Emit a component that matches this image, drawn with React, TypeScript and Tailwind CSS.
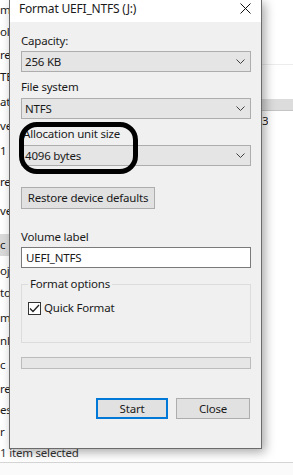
import React from "react";

const navItems = [
  { text: "mputer", cls: "mt-[-1px]", sel: false },
  { text: "olicies", cls: "mt-0", sel: false },
  { text: "rea", cls: "mt-[1px]", sel: false },
  { text: "TEAM", cls: "mt-[1px]", sel: false },
  { text: "ats", cls: "mt-[3px]", sel: false },
  { text: "ver", cls: "mt-[2px]", sel: false },
  { text: "1 ", cls: "mt-[3px]", sel: false },
  { text: "res", cls: "mt-[9px]", sel: false },
  { text: "ver", cls: "mt-[7px]", sel: false },
  { text: "c", cls: "mt-[13px]", sel: true },
  { text: "ojects", cls: "mt-[4px]", sel: false },
  { text: "top", cls: "mt-0", sel: false },
  { text: "ments", cls: "mt-[3px]", sel: false },
  { text: "nloads", cls: "mt-[1px]", sel: false },
  { text: "c", cls: "mt-[2px]", sel: false },
  { text: "res", cls: "mt-[3px]", sel: false },
  { text: "es", cls: "mt-[-1px]", sel: false },
  { text: "r", cls: "mt-0", sel: false },
];

function Chevron() {
  return (
    <svg width="9" height="5" viewBox="0 0 9 5" className="shrink-0">
      <polyline points="0.5,0.5 4.5,4.5 8.5,0.5" fill="none" stroke="#404040" strokeWidth="1" />
    </svg>
  );
}

function Combo({ value }: { value: string }) {
  return (
    <div className="h-[21px] w-full border border-[#adadad] bg-[#e5e5e5] flex items-center justify-between pl-[3px] pr-[5px]">
      <span>{value}</span>
      <Chevron />
    </div>
  );
}

export default function App() {
  return (
    <div className="relative w-[293px] h-[475px] overflow-hidden bg-white text-[11.5px] leading-[16px] tracking-[-0.2px] text-[#1a1a1a] font-['Noto_Sans',sans-serif]">
      {/* explorer window behind the dialog */}
      <div className="flex flex-col h-full">
        <div className="flex h-[443px]">
          <div className="w-[9px] overflow-hidden flex flex-col">
            {navItems.map((it, i) => (
              <div
                key={i}
                className={`h-[22px] flex items-center whitespace-nowrap ${it.cls} ${it.sel ? "bg-[#dadada]" : ""}`}
              >
                {it.text}
              </div>
            ))}
          </div>
          <div className="w-[141px]" />
          <div className="flex-1 flex flex-col">
            <div className="h-[65px] border-b border-[#ececec]" />
            <div className="h-[34px]" />
            <div className="h-[12px] bg-[#dcdcdc] border-b border-[#c4c4c4]" />
            <div className="flex mt-[2px]">
              <div className="w-[112px]" />
              <div className="w-[6px] overflow-hidden">3</div>
            </div>
          </div>
        </div>
        <div className="h-[19px] flex items-center whitespace-nowrap text-[#333]">1 item selected</div>
        <div className="flex-1 border-t border-[#d5d5d5] bg-[#fafafa]" />
      </div>

      {/* Format dialog */}
      <div className="absolute left-[9px] top-0 w-[253px] h-[449px] border-x border-b border-[#6b6b6b] bg-[#f0f0f0] shadow-[3px_3px_10px_rgba(0,0,0,0.35)] flex flex-col">
        <div className="h-[22px] bg-white flex items-center justify-between pl-[9px] pr-[10px] shrink-0">
          <span className="mt-[-4px] text-[12px]">Format UEFI_NTFS (J:)</span>
          <svg width="11" height="11" viewBox="0 0 11 11" className="mt-[-6px]">
            <path d="M0.5 0.5 L10.5 10.5 M10.5 0.5 L0.5 10.5" stroke="#111" strokeWidth="1" />
          </svg>
        </div>

        <div className="flex flex-col pl-[11px] pr-[10px]">
          <div className="mt-[11px] h-[16px]">Capacity:</div>
          <div className="mt-[2px]">
            <Combo value="256 KB" />
          </div>
          <div className="mt-[7px] h-[16px]">File system</div>
          <div className="mt-[3px]">
            <Combo value="NTFS" />
          </div>
          <div className="mt-[7px] h-[16px] pl-[2px]">Allocation unit size</div>
          <div className="mt-[3px]">
            <Combo value="4096 bytes" />
          </div>

          <button className="mt-[21px] h-[22px] w-[134px] border border-[#adadad] bg-[#e1e1e1] flex items-center justify-center">
            Restore device defaults
          </button>

          <div className="mt-[20px] h-[16px]">Volume label</div>
          <div className="mt-[2px] h-[21px] border border-[#7a7a7a] bg-white flex items-center pl-[4px]">
            UEFI_NTFS
          </div>

          <div className="relative mt-[16px] h-[59px] border border-[#dcdcdc] pt-[15px] pl-[6px]">
            <span className="absolute left-[6px] top-[-9px] bg-[#f0f0f0] px-[2px]">Format options</span>
            <div className="flex items-center gap-[3px]">
              <div className="w-[13px] h-[13px] border border-[#333] bg-white flex items-center justify-center">
                <svg width="11" height="9" viewBox="0 0 11 9">
                  <polyline points="1,4.5 4,7.5 10,1" fill="none" stroke="#222" strokeWidth="1.3" />
                </svg>
              </div>
              <span>Quick Format</span>
            </div>
          </div>

          <div className="mt-[14px] h-[12px] border border-[#bcbcbc] bg-[#e6e6e6]" />

          <div className="mt-[29px] flex justify-end gap-[8px] pr-[1px]">
            <button className="h-[21px] w-[72px] border-2 border-[#0078d7] bg-[#e1e1e1] flex items-center justify-center">
              Start
            </button>
            <button className="h-[21px] w-[74px] border border-[#adadad] bg-[#e1e1e1] flex items-center justify-center">
              Close
            </button>
          </div>
        </div>
      </div>

      {/* hand-drawn marker around the allocation unit size */}
      <div className="absolute left-[19px] top-[122px] w-[119px] h-[52px] border-[5px] border-black rounded-[18px]" />
    </div>
  );
}
